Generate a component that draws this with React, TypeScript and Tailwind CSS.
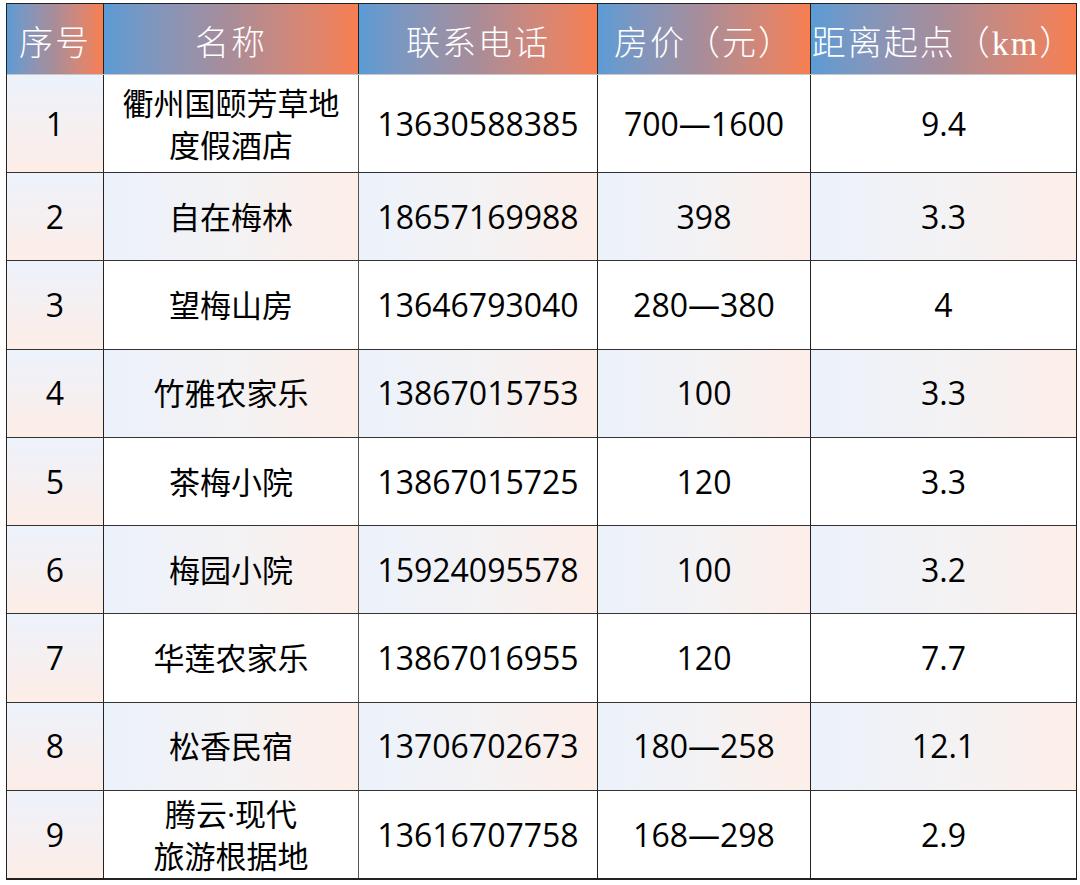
import React from "react";

type Row = {
  no: string;
  name: string[];
  phone: string;
  price: string;
  dist: string;
};

const rows: Row[] = [
  { no: "1", name: ["衢州国颐芳草地", "度假酒店"], phone: "13630588385", price: "700—1600", dist: "9.4" },
  { no: "2", name: ["自在梅林"], phone: "18657169988", price: "398", dist: "3.3" },
  { no: "3", name: ["望梅山房"], phone: "13646793040", price: "280—380", dist: "4" },
  { no: "4", name: ["竹雅农家乐"], phone: "13867015753", price: "100", dist: "3.3" },
  { no: "5", name: ["茶梅小院"], phone: "13867015725", price: "120", dist: "3.3" },
  { no: "6", name: ["梅园小院"], phone: "15924095578", price: "100", dist: "3.2" },
  { no: "7", name: ["华莲农家乐"], phone: "13867016955", price: "120", dist: "7.7" },
  { no: "8", name: ["松香民宿"], phone: "13706702673", price: "180—258", dist: "12.1" },
  { no: "9", name: ["腾云·现代", "旅游根据地"], phone: "13616707758", price: "168—298", dist: "2.9" },
];

const headers = ["序号", "名称", "联系电话", "房价（元）", "距离起点（km）"];
const widths = ["w-[96px]", "w-[255px]", "w-[239px]", "w-[213px]", "w-[266px]"];

const headGrad = "bg-gradient-to-r from-[#5b9bd5] via-[#a98c98] to-[#f87e4f]";
const lightGrad = "bg-gradient-to-r from-[#ecf2fb] via-[#f3f2f4] to-[#fdeee8]";
const firstColGrad = "bg-gradient-to-b from-[#edf2fb] to-[#fdede7]";

export default function App() {
  return (
    <div className="w-[1080px] h-[885px] bg-white pt-[3px] pl-[6px] font-['Open_Sans','Noto_Sans_CJK_SC',sans-serif]">
      <div className="w-[1071px] border-[1.5px] border-[#222] border-b-2">
        {/* header */}
        <div className="flex h-[71px] border-b border-[#c8c8cc] font-['Liberation_Serif','Noto_Sans_CJK_SC',serif]">
          {headers.map((h, i) => (
            <div
              key={h}
              className={`${widths[i]} ${headGrad} flex items-center justify-center pt-[8px] text-white text-[34px] font-light tracking-[2px] ${
                i > 0 ? "border-l border-[#222]" : ""
              }`}
            >
              {h}
            </div>
          ))}
        </div>

        {rows.map((r, idx) => {
          const even = idx % 2 === 1;
          const cellBg = even ? lightGrad : "bg-white";
          return (
            <div
              key={r.no}
              className={`flex text-[32px] text-black ${idx === 0 ? "h-[97px]" : "h-[88.3px]"} ${
                idx > 0 ? "border-t border-[#333]" : ""
              }`}
            >
              <div className={`${widths[0]} ${firstColGrad} flex items-center justify-center`}>{r.no}</div>
              <div
                className={`${widths[1]} ${cellBg} border-l border-[#222] flex flex-col items-center justify-center text-[31px] leading-[42px]`}
              >
                {r.name.map((n) => (
                  <span key={n}>{n}</span>
                ))}
              </div>
              <div className={`${widths[2]} ${cellBg} border-l border-[#555] flex items-center justify-center`}>
                {r.phone}
              </div>
              <div className={`${widths[3]} ${cellBg} border-l border-[#222] flex items-center justify-center`}>
                {r.price}
              </div>
              <div className={`${widths[4]} ${cellBg} border-l border-[#222] flex items-center justify-center`}>
                {r.dist}
              </div>
            </div>
          );
        })}
      </div>
    </div>
  );
}
